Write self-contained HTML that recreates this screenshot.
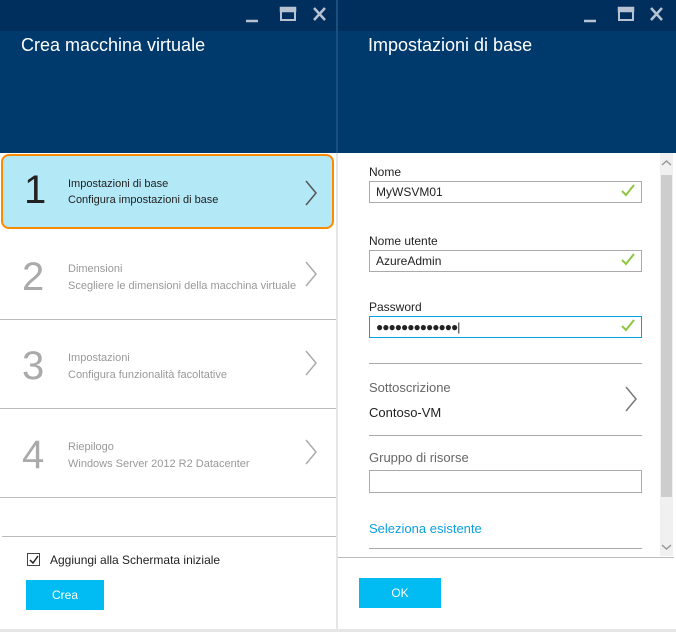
<!DOCTYPE html>
<html><head><meta charset="utf-8"><style>
*{margin:0;padding:0;box-sizing:border-box}
body{width:676px;height:632px;background:#e6e6e6;font-family:"Liberation Sans",sans-serif;position:relative;overflow:hidden}
.abs{position:absolute}
.bar{background:#002f5e;height:31px;top:0}
.hd{background:#003a6c;top:31px;height:122px}
.ttl{color:#fff;font-size:18px;top:35px}
.row{left:0;width:336px;height:89px;border-bottom:1px solid #bbb;background:#fff}
.num{font-size:40px;left:22px;top:24px;color:#aaa}
.t1{left:68px;top:32px;font-size:11px;color:#999}
.t2{left:68px;top:49px;font-size:11px;color:#999}
.chev{right:18px;top:30px}
.lbl{font-size:12px;color:#222;left:369px}
.inp{left:369px;width:273px;height:22px;border:1px solid #aaa;background:#fff;font-size:12px;padding:3px 6px;color:#222}
.chk{position:absolute;right:6px;top:2px}
.btn{background:#00bcf2;color:#fff;font-size:12px;text-align:center;line-height:30px}
</style></head><body>
<div class="abs" style="left:0;top:0;width:336px;height:629px;background:#fff"></div>
<div class="abs" style="left:338px;top:0;width:338px;height:629px;background:#fff"></div>
<div class="abs bar" style="left:0;width:336px"></div>
<div class="abs bar" style="left:338px;width:338px"></div>
<div class="abs hd" style="left:0;width:336px"></div>
<div class="abs hd" style="left:338px;width:338px"></div>
<div class="abs" style="left:336px;top:0;width:2px;height:153px;background:#1a4f80"></div>
<div class="abs ttl" style="left:21px">Crea macchina virtuale</div>
<div class="abs ttl" style="left:368px">Impostazioni di base</div>
<svg class="abs" style="left:245px;top:5px" width="84" height="18"><g stroke="#b7c3d2" fill="none" stroke-width="2.5"><line x1="1" y1="16" x2="13" y2="16"/><rect x="36" y="3" width="14" height="12" stroke-width="2"/><rect x="36" y="3" width="14" height="3" fill="#b7c3d2"/><path d="M69 3l11 12M80 3l-11 12"/></g></svg>
<svg class="abs" style="left:583px;top:5px" width="84" height="18"><g stroke="#b7c3d2" fill="none" stroke-width="2.5"><line x1="1" y1="16" x2="13" y2="16"/><rect x="36" y="3" width="14" height="12" stroke-width="2"/><rect x="36" y="3" width="14" height="3" fill="#b7c3d2"/><path d="M68 3l11 12M79 3l-11 12"/></g></svg>

<div class="abs" style="left:1px;top:154px;width:333px;height:75px;background:#b3e8f7;border:2px solid #f98c00;border-radius:8px"></div>
<div class="abs" style="left:24px;top:168px;font-size:40px;color:#222">1</div>
<div class="abs" style="left:68px;top:178px;font-size:11px;color:#222">Impostazioni di base</div>
<div class="abs" style="left:68px;top:194px;font-size:11px;color:#222">Configura impostazioni di base</div>
<svg class="abs" style="left:304px;top:180px" width="14" height="26"><path d="M2 1l10 12L2 25" stroke="#555" stroke-width="1.5" fill="none"/></svg>

<div class="abs row" style="top:231px"><div class="abs num">2</div><div class="abs t1">Dimensioni</div><div class="abs t2">Scegliere le dimensioni della macchina virtuale</div><svg class="abs chev" width="14" height="26"><path d="M2 1l10 12L2 25" stroke="#aaa" stroke-width="1.5" fill="none"/></svg></div>
<div class="abs row" style="top:320px"><div class="abs num">3</div><div class="abs t1">Impostazioni</div><div class="abs t2">Configura funzionalità facoltative</div><svg class="abs chev" width="14" height="26"><path d="M2 1l10 12L2 25" stroke="#aaa" stroke-width="1.5" fill="none"/></svg></div>
<div class="abs row" style="top:409px"><div class="abs num">4</div><div class="abs t1">Riepilogo</div><div class="abs t2">Windows Server 2012 R2 Datacenter</div><svg class="abs chev" width="14" height="26"><path d="M2 1l10 12L2 25" stroke="#aaa" stroke-width="1.5" fill="none"/></svg></div>
<div class="abs" style="left:2px;top:536px;width:334px;height:1px;background:#bbb"></div>
<div class="abs" style="left:27px;top:553px;width:13px;height:13px;border:1px solid #444;background:#fff"></div>
<svg class="abs" style="left:28px;top:554px" width="12" height="12"><path d="M2 6l3 3 5-7" stroke="#222" stroke-width="1.5" fill="none"/></svg>
<div class="abs" style="left:50px;top:553px;font-size:12px;color:#222">Aggiungi alla Schermata iniziale</div>
<div class="abs btn" style="left:26px;top:580px;width:78px;height:30px">Crea</div>

<div class="abs lbl" style="top:165px">Nome</div>
<div class="abs inp" style="top:181px">MyWSVM01<svg class="chk" width="14" height="14"><path d="M1 7l4 4 8-10" stroke="#8dc63f" stroke-width="2" fill="none"/></svg></div>
<div class="abs lbl" style="top:234px">Nome utente</div>
<div class="abs inp" style="top:250px">AzureAdmin<svg class="chk" width="14" height="14"><path d="M1 7l4 4 8-10" stroke="#8dc63f" stroke-width="2" fill="none"/></svg></div>
<div class="abs lbl" style="top:300px">Password</div>
<div class="abs inp" style="top:316px;border-color:#00a4e8;letter-spacing:-1px">●●●●●●●●●●●●●|<svg class="chk" width="14" height="14"><path d="M1 7l4 4 8-10" stroke="#8dc63f" stroke-width="2" fill="none"/></svg></div>
<div class="abs" style="left:369px;top:363px;width:273px;height:1px;background:#aaa"></div>
<div class="abs" style="left:369px;top:380px;font-size:13px;color:#666">Sottoscrizione</div>
<div class="abs" style="left:369px;top:405px;font-size:13px;color:#222">Contoso-VM</div>
<svg class="abs" style="left:624px;top:386px" width="14" height="26"><path d="M2 1l10 12L2 25" stroke="#777" stroke-width="1.5" fill="none"/></svg>
<div class="abs" style="left:369px;top:435px;width:273px;height:1px;background:#aaa"></div>
<div class="abs" style="left:369px;top:450px;font-size:13px;color:#666">Gruppo di risorse</div>
<div class="abs inp" style="top:470px;height:23px"></div>
<div class="abs" style="left:369px;top:521px;font-size:13px;color:#0ba1e0">Seleziona esistente</div>
<div class="abs" style="left:369px;top:548px;width:273px;height:1px;background:#aaa"></div>
<div class="abs" style="left:660px;top:153px;width:13px;height:403px;background:#f0f0f0"></div>
<div class="abs" style="left:661px;top:175px;width:11px;height:322px;background:#cdcdcd"></div>
<svg class="abs" style="left:660px;top:158px" width="13" height="10"><path d="M2 7l4.5-4 4.5 4" stroke="#999" stroke-width="1.5" fill="none"/></svg>
<svg class="abs" style="left:660px;top:542px" width="13" height="10"><path d="M2 3l4.5 4 4.5-4" stroke="#999" stroke-width="1.5" fill="none"/></svg>
<div class="abs" style="left:338px;top:557px;width:336px;height:1px;background:#bbb"></div>
<div class="abs btn" style="left:359px;top:578px;width:82px;height:30px">OK</div>
</body></html>
